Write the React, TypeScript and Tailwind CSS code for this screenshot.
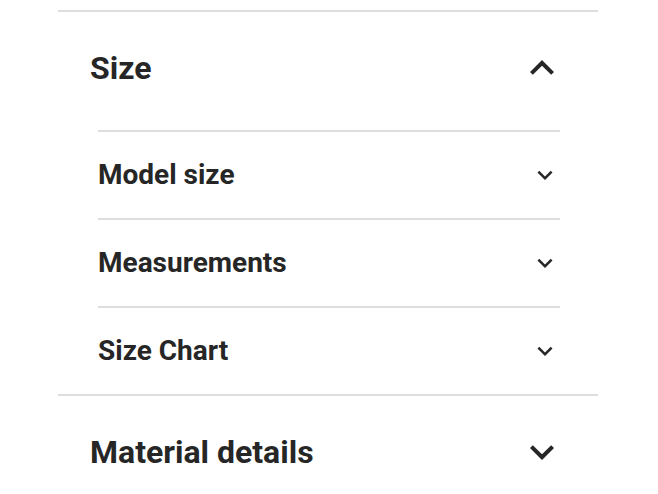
import { useState } from "react";

function ChevronBig({ up }: { up?: boolean }) {
  return (
    <svg width="48" height="48" viewBox="0 0 24 24" fill="#262626" className={up ? "" : "rotate-180"}>
      <path d="M12 8l-6 6 1.41 1.41L12 10.83l4.59 4.58L18 14z" />
    </svg>
  );
}

function ChevronSmall() {
  return (
    <svg width="30" height="30" viewBox="0 0 24 24" fill="#262626">
      <path d="M16.59 8.59L12 13.17 7.41 8.59 6 10l6 6 6-6z" />
    </svg>
  );
}

const subItems = ["Model size", "Measurements", "Size Chart"];

export default function App() {
  const [open, setOpen] = useState(true);

  return (
    <div className="bg-white w-[658px] h-[494px] overflow-hidden pt-[10px] font-['Roboto',sans-serif] text-[#262626]">
      <div className="ml-[58px] mr-[60px]">
        <section className="border-t-2 border-[#dddddd]">
          <button
            onClick={() => setOpen(!open)}
            className="w-full flex items-center justify-between pl-8 pr-8 py-8"
          >
            <span className="text-[32px] leading-[48px] font-bold">Size</span>
            <ChevronBig up={open} />
          </button>
          {open && (
            <div className="ml-10 mr-[38px] mt-1.5">
              {subItems.map((item) => (
                <div
                  key={item}
                  className="border-t-2 border-[#dddddd] h-[88px] flex items-center justify-between"
                >
                  <span className="text-[28px] font-bold">{item}</span>
                  <ChevronSmall />
                </div>
              ))}
            </div>
          )}
        </section>
        <section className="border-t-2 border-[#dddddd]">
          <button className="w-full flex items-center justify-between pl-8 pr-8 py-8">
            <span className="text-[32px] leading-[48px] font-bold">Material details</span>
            <ChevronBig />
          </button>
        </section>
      </div>
    </div>
  );
}
